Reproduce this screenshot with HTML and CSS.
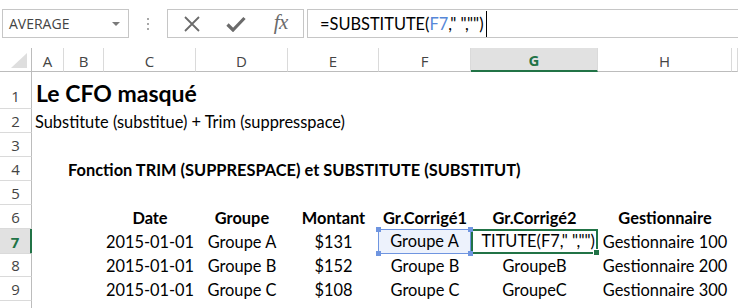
FILE: index.html
```html
<!DOCTYPE html>
<html lang="fr">
<head>
<meta charset="utf-8">
<title>Le CFO masqué</title>
<link rel="stylesheet" href="styles.css">
</head>
<body>
<div class="fbar">
  <div class="namebox"><span>AVERAGE</span><span class="caret"></span></div>
  <div class="grip"><i></i><i></i><i></i></div>
  <div class="buttons">
    <span class="btn">
      <svg width="18" height="16" viewBox="0 0 18 16"><path d="M2 1 L16 15 M16 1 L2 15" stroke="#6b6b6b" stroke-width="1.8" fill="none"/></svg>
    </span>
    <span class="btn">
      <svg width="20" height="16" viewBox="0 0 20 16"><path d="M1.5 8.5 L7 14 L18.5 2" stroke="#6b6b6b" stroke-width="3.2" fill="none"/></svg>
    </span>
    <span class="btn fx">fx</span>
  </div>
  <div class="formula"><span>=SUBSTITUTE(<span class="ref">F7</span>," ","")</span><span class="cursor"></span></div>
</div>

<div class="sheet">
  <div class="row colhead">
    <div class="corner"><span class="tri"></span></div>
    <div class="ch">A</div>
    <div class="ch">B</div>
    <div class="ch">C</div>
    <div class="ch">D</div>
    <div class="ch">E</div>
    <div class="ch">F</div>
    <div class="ch sel">G</div>
    <div class="ch">H</div>
    <div class="ch"></div>
  </div>

  <div class="row r1">
    <div class="rh">1</div>
    <div class="c title from-a">Le CFO masqué</div>
  </div>
  <div class="row">
    <div class="rh">2</div>
    <div class="c from-a">Substitute (substitue) + Trim (suppresspace)</div>
  </div>
  <div class="row">
    <div class="rh">3</div>
  </div>
  <div class="row">
    <div class="rh">4</div>
    <div class="c b from-b">Fonction TRIM (SUPPRESPACE) et SUBSTITUTE (SUBSTITUT)</div>
  </div>
  <div class="row">
    <div class="rh">5</div>
  </div>
  <div class="row">
    <div class="rh">6</div>
    <div class="c"></div>
    <div class="c"></div>
    <div class="c b ctr">Date</div>
    <div class="c b ctr">Groupe</div>
    <div class="c b ctr">Montant</div>
    <div class="c b ctr">Gr.Corrigé1</div>
    <div class="c b ctr">Gr.Corrigé2</div>
    <div class="c b ctr">Gestionnaire</div>
  </div>
  <div class="row">
    <div class="rh sel">7</div>
    <div class="c"></div>
    <div class="c"></div>
    <div class="c ctr">2015-01-01</div>
    <div class="c ctr">Groupe A</div>
    <div class="c ctr">$131</div>
    <div class="c ctr refcell">Groupe A<i class="h tl"></i><i class="h tr"></i><i class="h bl"></i><i class="h br"></i></div>
    <div class="c active"><div class="clip"><span>TITUTE(F7," ","")</span></div><i class="fill"></i></div>
    <div class="c ctr">Gestionnaire 100</div>
  </div>
  <div class="row">
    <div class="rh">8</div>
    <div class="c"></div>
    <div class="c"></div>
    <div class="c ctr">2015-01-01</div>
    <div class="c ctr">Groupe B</div>
    <div class="c ctr">$152</div>
    <div class="c ctr">Groupe B</div>
    <div class="c ctr">GroupeB</div>
    <div class="c ctr">Gestionnaire 200</div>
  </div>
  <div class="row">
    <div class="rh">9</div>
    <div class="c"></div>
    <div class="c"></div>
    <div class="c ctr">2015-01-01</div>
    <div class="c ctr">Groupe C</div>
    <div class="c ctr">$108</div>
    <div class="c ctr">Groupe C</div>
    <div class="c ctr">GroupeC</div>
    <div class="c ctr">Gestionnaire 300</div>
  </div>
  <div class="row tail">
    <div class="rh"></div>
  </div>
</div>
</body>
</html>
```

FILE: styles.css
```css
* { box-sizing: border-box; }

html, body {
  margin: 0;
  padding: 0;
  background: #fff;
}

body {
  width: 738px;
  height: 308px;
  overflow: hidden;
  font-family: Lato, "Liberation Sans", sans-serif;
  color: #000;
}

/* ---------- formula bar ---------- */
.fbar {
  display: flex;
  height: 48px;
  padding: 9px 0 10px 2px;
}

.namebox {
  width: 127px;
  border: 1px solid #c6c6c6;
  display: flex;
  align-items: center;
  justify-content: space-between;
  padding: 0 8px 0 6px;
  font-family: "Open Sans", sans-serif;
  font-size: 14px;
  color: #444;
}

.caret {
  width: 0;
  height: 0;
  border-left: 4px solid transparent;
  border-right: 4px solid transparent;
  border-top: 4px solid #7a7a7a;
}

.grip {
  width: 38px;
  display: flex;
  flex-direction: column;
  align-items: center;
  justify-content: center;
  gap: 3px;
}

.grip i {
  display: block;
  width: 2px;
  height: 2px;
  background: #a8a8a8;
}

.buttons {
  width: 137px;
  border: 1px solid #c6c6c6;
  display: grid;
  grid-template-columns: 1fr 1fr 1fr;
  align-items: center;
  justify-items: center;
  padding-left: 2px;
}

.btn {
  display: flex;
  align-items: center;
  justify-content: center;
}

.fx {
  font-family: "Liberation Serif", "DejaVu Serif", serif;
  font-style: italic;
  font-size: 21px;
  color: #6b6b6b;
  letter-spacing: -0.5px;
  padding-bottom: 2px;
}

.formula {
  flex: 1;
  margin-left: 3px;
  border: 1px solid #c6c6c6;
  border-right: none;
  padding-left: 12px;
  display: flex;
  align-items: center;
  font-size: 16.4px;
  white-space: nowrap;
}

.ref { color: #5687d8; }

.cursor {
  display: block;
  width: 1px;
  height: 26px;
  background: #000;
  margin-left: 2px;
}

/* ---------- sheet ---------- */
.row {
  display: grid;
  grid-template-columns: 32px 32px 40px 92px 92px 91px 92px 127px 134px 6px;
  height: 24px;
}

.row.r1 { height: 37px; }
.row.tail { height: 7px; }

.colhead .ch,
.corner {
  border-right: 1px solid #dadada;
  border-bottom: 1px solid #bcbcbc;
  display: flex;
  align-items: center;
  justify-content: center;
  padding-top: 2px;
  font-family: "Open Sans", sans-serif;
  font-size: 15px;
  color: #444;
}

.corner {
  border-right-color: #bcbcbc;
  align-items: flex-end;
  justify-content: flex-end;
  padding: 0 4px 3px 0;
}

.tri {
  display: block;
  width: 16px;
  height: 15px;
  background: #dedede;
  clip-path: polygon(100% 0, 100% 100%, 0 100%);
}

.ch.sel {
  background: #e1e1e1;
  border-bottom: 2px solid #217346;
  color: #217346;
  font-weight: bold;
}

.rh {
  border-right: 1px solid #bcbcbc;
  border-bottom: 1px solid #dadada;
  display: flex;
  align-items: flex-end;
  justify-content: center;
  padding-bottom: 1px;
  font-family: "Open Sans", sans-serif;
  font-size: 15px;
  line-height: 20px;
  color: #444;
}

.r1 .rh { padding-bottom: 2px; }
.tail .rh { border-bottom: none; }

.rh.sel {
  background: #e1e1e1;
  border-right: 2px solid #217346;
  color: #217346;
  font-weight: bold;
}

.c {
  display: flex;
  align-items: flex-end;
  padding: 0 0 1.5px 3px;
  font-size: 16.4px;
  line-height: 20px;
  white-space: nowrap;
  overflow: hidden;
  position: relative;
}

.c.ctr {
  justify-content: center;
  padding-left: 0;
}

.c.b { font-weight: bold; }

.from-a { grid-column: 2 / -1; }
.from-b { grid-column: 3 / -1; padding-left: 4px; }

.title {
  font-weight: bold;
  font-size: 23px;
  line-height: 28px;
  padding-bottom: 2px;
  padding-left: 4px;
}

/* reference cell (F7) */
.refcell {
  overflow: visible;
  background: #edf2fc;
  border: 1px solid #6f95e0;
  margin-left: -1px;
  z-index: 2;
}

.refcell .h {
  position: absolute;
  width: 5px;
  height: 5px;
  background: #6f95e0;
}
.refcell .tl { left: -3px; top: -3px; }
.refcell .tr { right: -3px; top: -3px; }
.refcell .bl { left: -3px; bottom: -3px; }
.refcell .br { right: -3px; bottom: -3px; }

/* active cell (G7) */
.active {
  overflow: visible;
  border: 2px solid #217346;
  padding: 0 1px 0 2px;
  z-index: 1;
}

.active .clip {
  flex: 1;
  min-width: 0;
  display: flex;
  justify-content: flex-end;
  overflow: hidden;
  padding-bottom: 0.5px;
}

.active .clip span {
  flex-shrink: 0;
}

.active .fill {
  position: absolute;
  right: -4px;
  bottom: -4px;
  width: 7px;
  height: 7px;
  background: #217346;
  border: 1px solid #fff;
}
```
